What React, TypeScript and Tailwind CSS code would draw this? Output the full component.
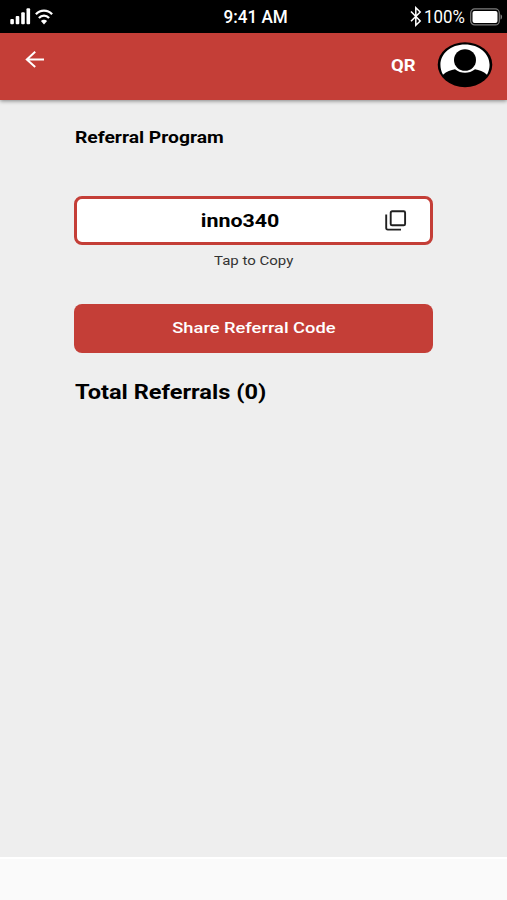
import { useState } from 'react';

const SignalIcon = () => (
  <svg width="21" height="17" viewBox="0 0 21 17" fill="#fff">
    <rect x="0.3" y="11" width="3.6" height="5.2" rx="1" />
    <rect x="5.7" y="8" width="3.6" height="8.2" rx="1" />
    <rect x="11.2" y="4.2" width="3.6" height="12" rx="1" />
    <rect x="16.5" y="0.3" width="3.6" height="15.9" rx="1" />
  </svg>
);

const WifiIcon = () => (
  <svg width="18" height="16" viewBox="0 0 18 16" fill="none" stroke="#fff" strokeWidth="2.3">
    <path d="M0.9 5.2C5.5 0.4 12.5 0.4 17.1 5.2" />
    <path d="M3.9 9C6.8 5.9 11.2 5.9 14.1 9" />
    <path d="M9 15.4L5.9 12C7.6 10.2 10.4 10.2 12.1 12Z" fill="#fff" stroke="none" />
  </svg>
);

const BluetoothIcon = () => (
  <svg width="12" height="21" viewBox="0 0 12 21" fill="none" stroke="#fff" strokeWidth="1.5">
    <path d="M1 5.6L10.2 15L5.8 19.2V1.7L10.2 6L1 15.2" />
  </svg>
);

const BatteryIcon = () => (
  <svg width="34" height="18" viewBox="0 0 34 18">
    <rect x="0.7" y="0.9" width="28.6" height="16" rx="4" fill="none" stroke="#7c7c7c" strokeWidth="1.2" />
    <rect x="2.5" y="3.1" width="25" height="11.8" rx="2" fill="#fff" />
    <path d="M30.5 6.2C32.6 6.9 32.6 10.9 30.5 11.6Z" fill="#7c7c7c" />
  </svg>
);

const BackIcon = () => (
  <svg width="20" height="18" viewBox="0 0 20 18" fill="none" stroke="#fff" strokeWidth="2">
    <path d="M19 9.4H1.8M10.2 1.7L1.8 9.4L10.2 16.9" />
  </svg>
);

const AvatarIcon = () => (
  <svg width="56" height="46" viewBox="0 0 56 46">
    <ellipse cx="28" cy="22.7" rx="27.3" ry="22.5" fill="#000" />
    <path
      d="M6 32.7C-2 17.5 9.5 2.4 28 2.4C46.5 2.4 58 17.5 50 32.7C46.5 29.6 42 28 38 27.3C32 32 24 32 18 27.3C14 28 9.5 29.6 6 32.7Z"
      fill="#fff"
    />
    <ellipse cx="28" cy="18" rx="11" ry="10.8" fill="#000" />
  </svg>
);

const CopyIcon = () => (
  <svg width="22" height="21" viewBox="0 0 22 21" fill="none" stroke="#202020" strokeWidth="1.9">
    <rect x="5.7" y="1.3" width="14.4" height="14" rx="1.4" />
    <path d="M1.2 4.6V18.1Q1.2 19.6 2.8 19.6H16" />
  </svg>
);

const StatusBar = () => (
  <div className="flex h-[33px] items-center bg-black text-white">
    <div className="flex flex-1 items-center gap-1 pl-2.5">
      <SignalIcon />
      <WifiIcon />
    </div>
    <span className="mt-px mr-[3px] inline-block scale-x-[0.9] text-[19px] leading-5 font-medium">9:41 AM</span>
    <div className="flex flex-1 items-center justify-end pr-[3px]">
      <BluetoothIcon />
      <span className="mt-px ml-[2px] inline-block w-[46px] origin-left scale-x-[0.89] text-[19px] leading-5 whitespace-nowrap">100%</span>
      <BatteryIcon />
    </div>
  </div>
);

const Header = () => (
  <header className="relative flex h-[67px] justify-between bg-[#c43e37] text-white shadow-[0_1px_4px_rgba(0,0,0,0.45)]">
    <button aria-label="Back" className="ml-[25px] h-[18px] pt-[17px]">
      <BackIcon />
    </button>
    <div className="flex pr-3.5">
      <span className="mt-[23px] mr-[21px] inline-block w-[25px] origin-left scale-x-[1.15] text-[16px] leading-5 font-bold">QR</span>
      <div className="pt-[9px]">
        <AvatarIcon />
      </div>
    </div>
  </header>
);

const App = () => {
  const [copied, setCopied] = useState(false);
  const code = 'inno340';

  const handleCopy = () => {
    navigator.clipboard?.writeText(code);
    setCopied(true);
  };

  return (
    <div className="flex h-[900px] w-[507px] flex-col overflow-hidden bg-[#fafafa] font-['Roboto',sans-serif] text-black">
      <StatusBar />
      <Header />
      <main className="flex h-[757px] flex-col bg-[#eeeeee] px-[74px]">
        <h1 className="mt-7 ml-px w-fit origin-left scale-x-[1.205] text-[16px] leading-5 font-bold">Referral Program</h1>
        <button
          onClick={handleCopy}
          className="mt-12 flex h-[49px] w-[359px] items-center rounded-[8px] border-3 border-[#c43e37] bg-white"
        >
          <span className="w-[302px] pt-0.5 pl-6 text-center">
            <span className="inline-block scale-x-[1.19] text-[18px] leading-6 font-bold">{code}</span>
          </span>
          <span className="ml-1.5">
            <CopyIcon />
          </span>
        </button>
        <p className="mt-2 text-center text-[12px] leading-4 text-[#333]">
          <span className="inline-block scale-x-[1.25]">{copied ? 'Copied' : 'Tap to Copy'}</span>
        </p>
        <button className="mt-[35px] h-[49px] w-[359px] rounded-[8px] bg-[#c43e37] pb-px text-white">
          <span className="inline-block scale-x-[1.22] text-[15px] leading-5 font-medium">Share Referral Code</span>
        </button>
        <h2 className="mt-[27px] ml-px w-fit origin-left scale-x-[1.18] text-[20px] leading-6 font-bold">Total Referrals (0)</h2>
      </main>
      <footer className="flex-1 border-t-2 border-white bg-[#fafafa]" />
    </div>
  );
};

export default App;
